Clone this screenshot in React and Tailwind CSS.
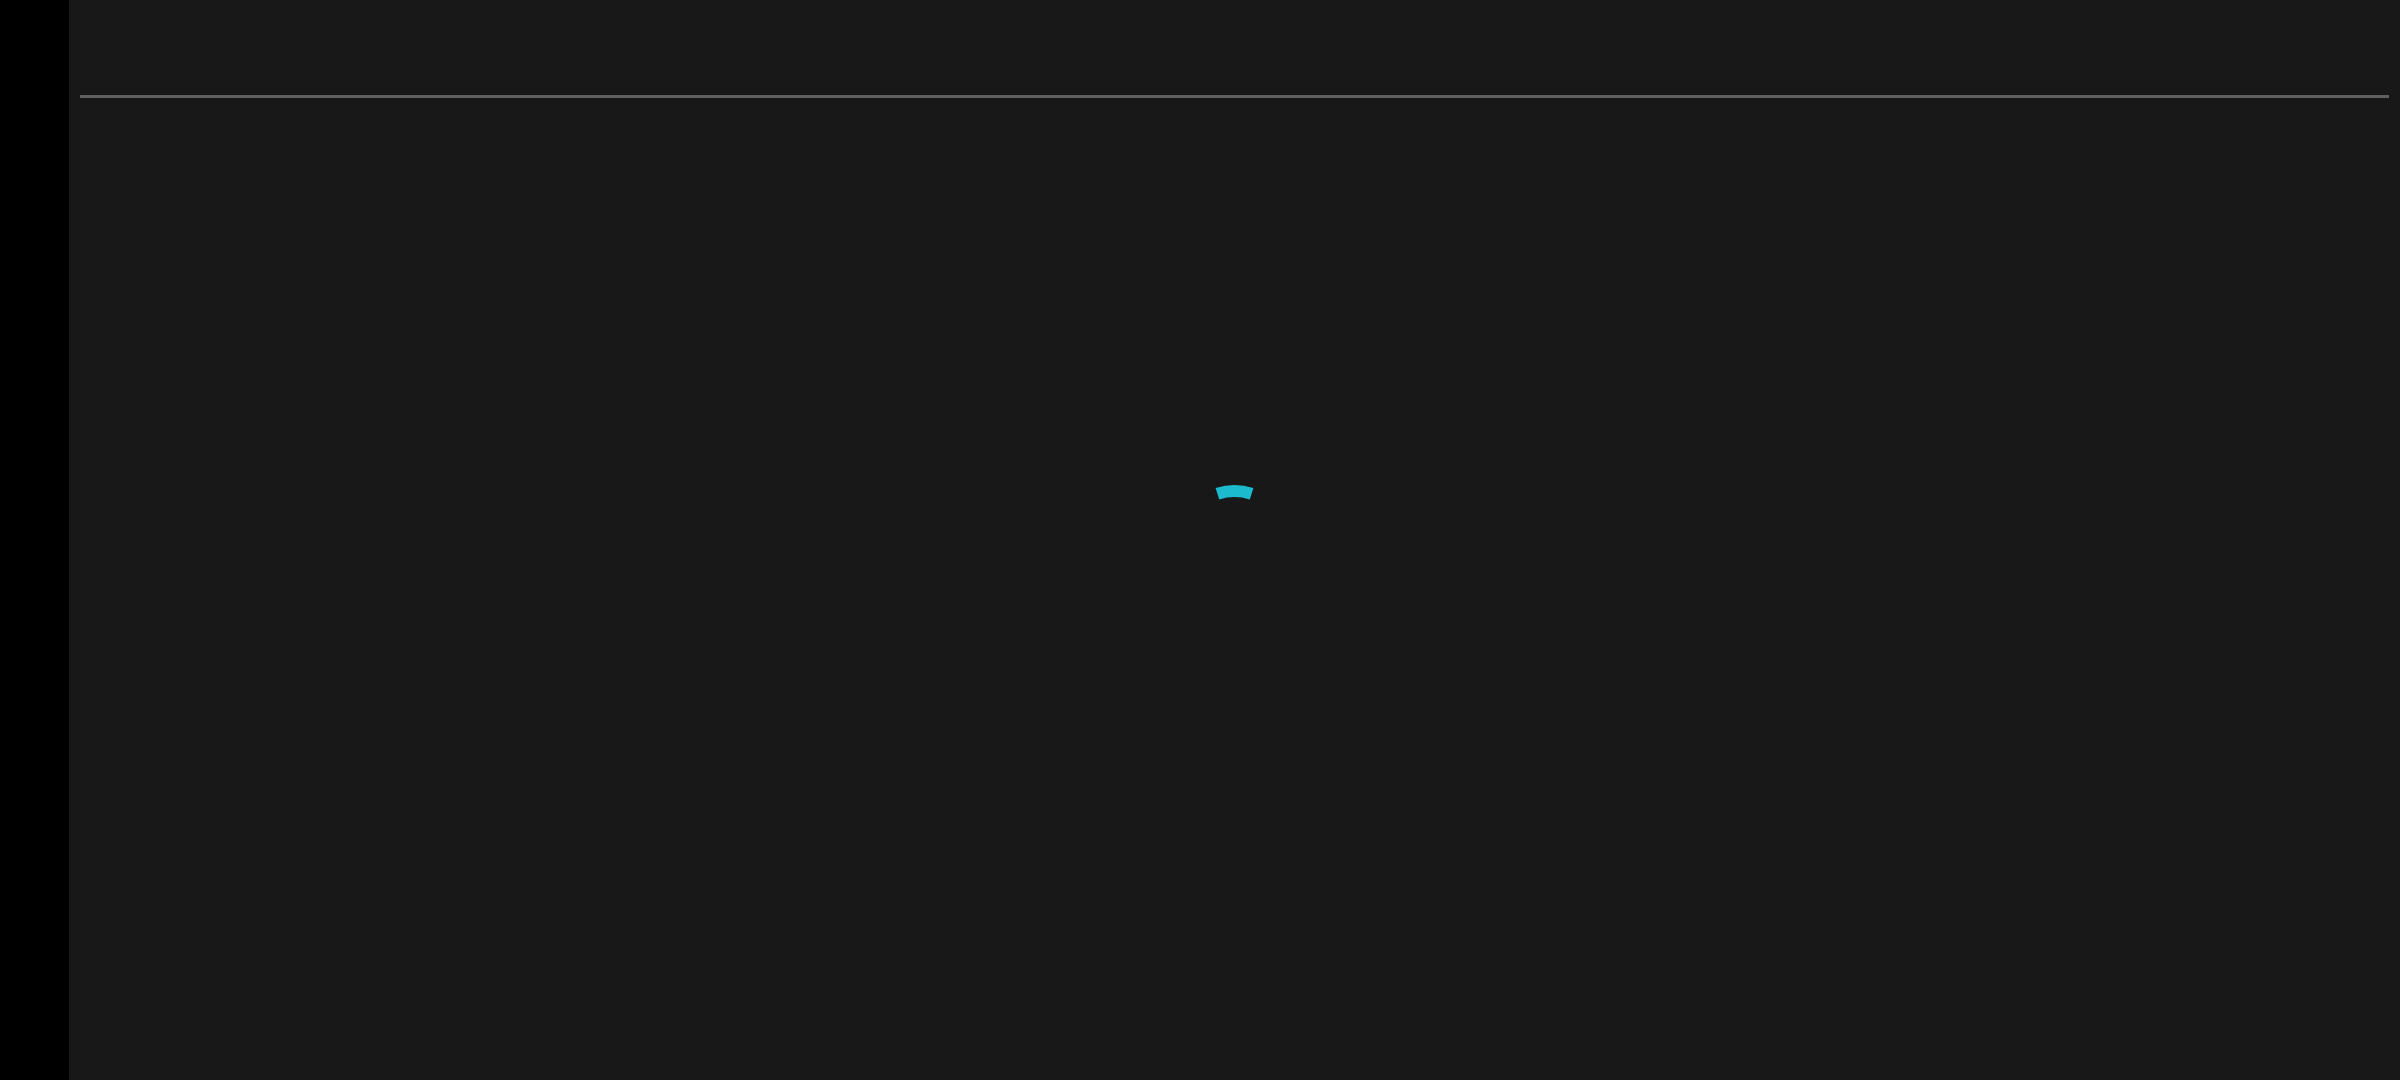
const Spinner = () => (
  <svg width="150" height="150" viewBox="0 0 150 150" fill="none" aria-hidden="true">
    <path d="M57.4 14.7A56 56 0 0 1 91.6 14.7" stroke="#1cbacd" strokeWidth="12" />
  </svg>
);

export default function App() {
  return (
    <div className="flex h-[1080px] w-full bg-black">
      <aside className="w-[69px] shrink-0 bg-black" />
      <main className="flex flex-1 flex-col bg-[#181818]">
        <div className="h-[95px] shrink-0" />
        <div className="mx-[11px] h-[3px] shrink-0 bg-[#606060]" />
        <div className="flex flex-1 justify-center pt-[381px]">
          <Spinner />
        </div>
      </main>
    </div>
  );
}
